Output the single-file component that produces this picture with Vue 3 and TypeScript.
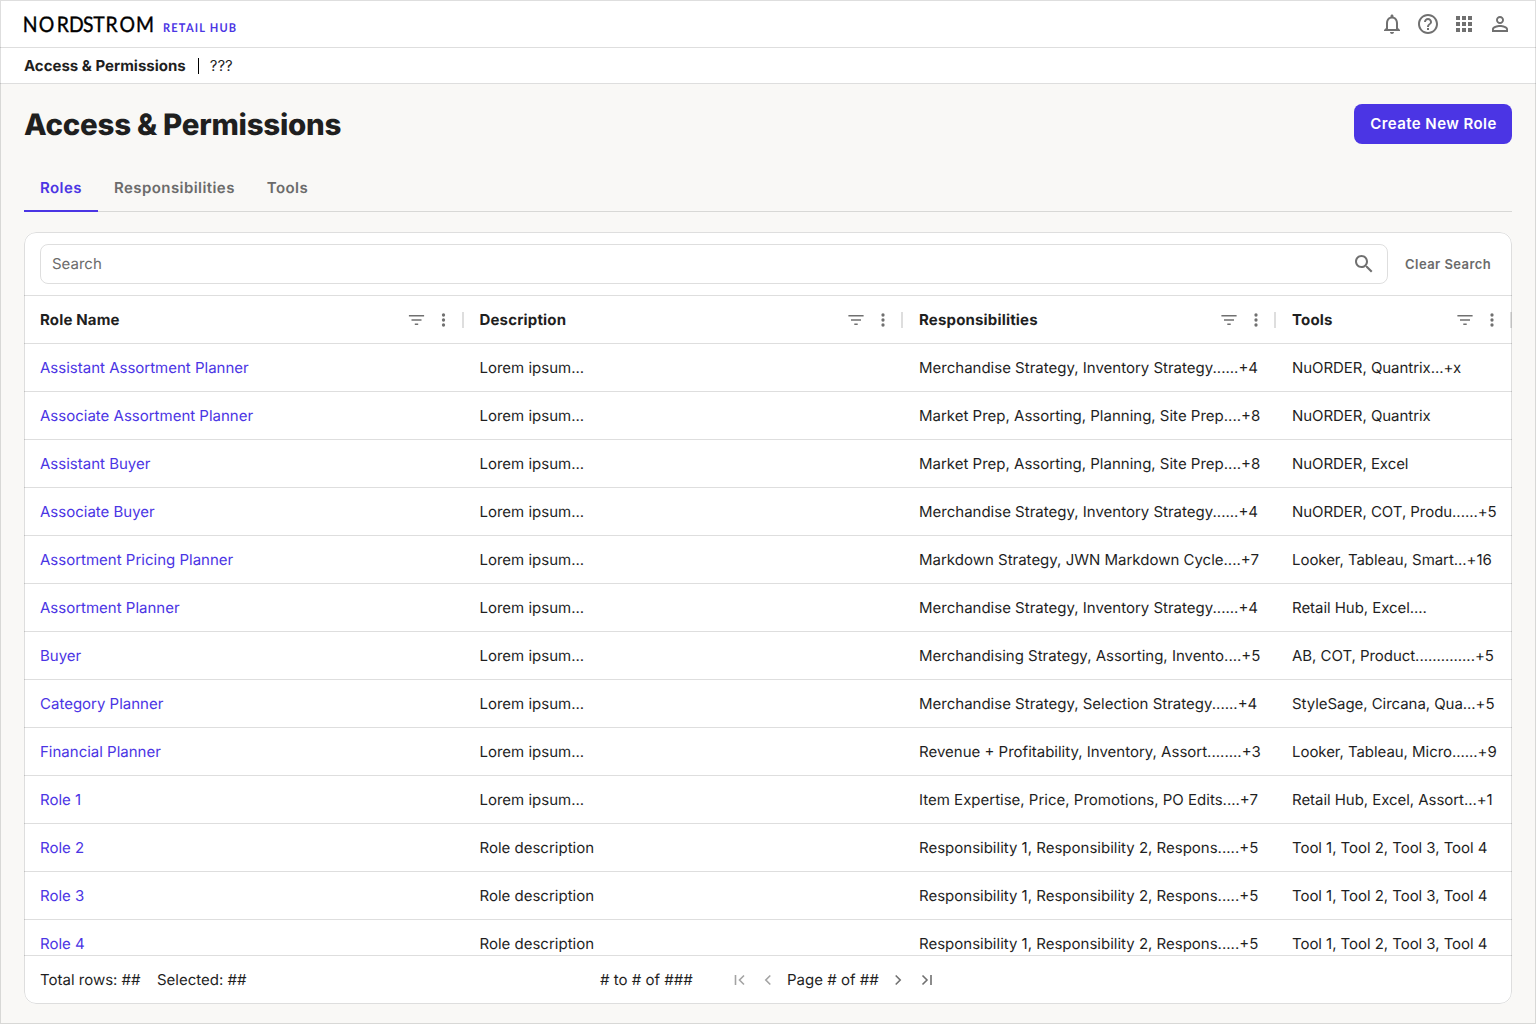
<script setup lang="ts">
interface Role {
  name: string
  description: string
  responsibilities: string
  tools: string
}

const columns: string[] = ['Role Name', 'Description', 'Responsibilities', 'Tools']
const tabs: string[] = ['Roles', 'Responsibilities', 'Tools']
const activeTab = 'Roles'

const lorem = 'Lorem ipsum...'
const role = (name: string, responsibilities: string, tools: string, description = lorem): Role => ({
  name,
  description,
  responsibilities,
  tools,
})

const placeholder = (n: number): Role =>
  role(
    `Role ${n}`,
    'Responsibility 1, Responsibility 2, Respons.....+5',
    'Tool 1, Tool 2, Tool 3, Tool 4',
    'Role description',
  )

const roles: Role[] = [
  role('Assistant Assortment Planner', 'Merchandise Strategy, Inventory Strategy......+4', 'NuORDER, Quantrix...+x'),
  role('Associate Assortment Planner', 'Market Prep, Assorting, Planning, Site Prep....+8', 'NuORDER, Quantrix'),
  role('Assistant Buyer', 'Market Prep, Assorting, Planning, Site Prep....+8', 'NuORDER, Excel'),
  role('Associate Buyer', 'Merchandise Strategy, Inventory Strategy......+4', 'NuORDER, COT, Produ......+5'),
  role('Assortment Pricing Planner', 'Markdown Strategy, JWN Markdown Cycle....+7', 'Looker, Tableau, Smart...+16'),
  role('Assortment Planner', 'Merchandise Strategy, Inventory Strategy......+4', 'Retail Hub, Excel....'),
  role('Buyer', 'Merchandising Strategy, Assorting, Invento....+5', 'AB, COT, Product..............+5'),
  role('Category Planner', 'Merchandise Strategy, Selection Strategy......+4', 'StyleSage, Circana, Qua...+5'),
  role('Financial Planner', 'Revenue + Profitability, Inventory, Assort........+3', 'Looker, Tableau, Micro......+9'),
  role('Role 1', 'Item Expertise, Price, Promotions, PO Edits....+7', 'Retail Hub, Excel, Assort...+1'),
  placeholder(2),
  placeholder(3),
  placeholder(4),
]
</script>

<template>
  <div class="page">
    <header class="topbar">
      <svg class="brand" viewBox="0 0 220 47">
        <text class="wordmark" transform="scale(0.9 1)" x="6.9 25 43.1 58.2 71.4 83.3 97.3 114.6 134.3" y="31.8">NORDSTROM</text>
        <text class="product" transform="translate(139 0) scale(0.92 1)" y="32" textLength="79.5" lengthAdjust="spacing">RETAIL HUB</text>
      </svg>
      <nav class="actions">
        <svg viewBox="0 0 24 24"><path d="M12 22c1.1 0 2-.9 2-2h-4c0 1.1.9 2 2 2zm6-6v-5c0-3.07-1.63-5.64-4.5-6.32V4c0-.83-.67-1.5-1.5-1.5s-1.5.67-1.5 1.5v.68C7.64 5.36 6 7.92 6 11v5l-2 2v1h16v-1l-2-2zm-2 1H8v-6c0-2.48 1.51-4.5 4-4.5s4 2.02 4 4.5v6z" /></svg>
        <svg viewBox="0 0 24 24"><path d="M11 18h2v-2h-2v2zm1-16C6.48 2 2 6.48 2 12s4.48 10 10 10 10-4.48 10-10S17.52 2 12 2zm0 18c-4.41 0-8-3.59-8-8s3.59-8 8-8 8 3.59 8 8-3.59 8-8 8zm0-14c-2.21 0-4 1.79-4 4h2c0-1.1.9-2 2-2s2 .9 2 2c0 2-3 1.75-3 5h2c0-2.25 3-2.5 3-5 0-2.21-1.79-4-4-4z" /></svg>
        <svg viewBox="0 0 24 24"><path d="M4 8h4V4H4v4zm6 12h4v-4h-4v4zm-6 0h4v-4H4v4zm0-6h4v-4H4v4zm6 0h4v-4h-4v4zm6-10v4h4V4h-4zm-6 4h4V4h-4v4zm6 6h4v-4h-4v4zm0 6h4v-4h-4v4z" /></svg>
        <svg viewBox="0 0 24 24"><path d="M12 5.9c1.16 0 2.1.94 2.1 2.1s-.94 2.1-2.1 2.1S9.900 9.160 9.900 8s.94-2.1 2.1-2.1m0 9c2.970 0 6.100 1.460 6.100 2.100v1.100H5.900V17c0-.64 3.130-2.100 6.100-2.100M12 4C9.790 4 8 5.790 8 8s1.790 4 4 4 4-1.790 4-4-1.790-4-4-4zm0 9c-2.670 0-8 1.340-8 4v3h16v-3c0-2.660-5.330-4-8-4z" /></svg>
      </nav>
    </header>

    <div class="crumbs">
      <strong>Access &amp; Permissions</strong>
      <span class="bar"></span>
      <span class="crumb">???</span>
    </div>

    <main class="content">
      <div class="heading">
        <h1>Access &amp; Permissions</h1>
        <button class="create" type="button">Create New Role</button>
      </div>

      <div class="tabs">
        <div v-for="tab in tabs" :key="tab" class="tab" :class="{ active: tab === activeTab }">{{ tab }}</div>
      </div>

      <section class="card">
        <div class="toolbar">
          <div class="search">
            <span>Search</span>
            <svg viewBox="0 0 24 24"><path d="M15.5 14h-.79l-.28-.27C15.410 12.590 16 11.110 16 9.500 16 5.910 13.090 3 9.500 3S3 5.910 3 9.500 5.910 16 9.500 16c1.610 0 3.090-.59 4.230-1.570l.27.28v.79l5 4.990L20.490 19l-4.990-5zm-6 0C7.010 14 5 11.990 5 9.500S7.010 5 9.500 5 14 7.010 14 9.500 11.990 14 9.500 14z" /></svg>
          </div>
          <button class="clear" type="button">Clear Search</button>
        </div>

        <div class="row head">
          <div v-for="column in columns" :key="column" class="cell">
            <span class="label">{{ column }}</span>
            <svg class="filter" viewBox="0 0 20 20"><path d="M2.400 5h15.200v1.500H2.400zM5 9.250h10v1.500H5zM8.300 13.500h3.400V15H8.300z" /></svg>
            <svg class="more" viewBox="0 0 20 20"><circle cx="10" cy="5" r="1.650" /><circle cx="10" cy="10" r="1.650" /><circle cx="10" cy="15" r="1.650" /></svg>
            <i class="handle"></i>
          </div>
        </div>

        <div class="body">
          <div v-for="item in roles" :key="item.name" class="row">
            <a class="cell link">{{ item.name }}</a>
            <div class="cell">{{ item.description }}</div>
            <div class="cell">{{ item.responsibilities }}</div>
            <div class="cell tools">{{ item.tools }}</div>
          </div>
        </div>

        <footer class="footer">
          <span class="total">Total rows: ##</span>
          <span class="selected">Selected: ##</span>
          <div class="pager">
            <span class="range"># to # of ###</span>
            <svg class="dim first" viewBox="0 0 20 20"><path d="M5.500 5v10M14 5.500 9.500 10l4.500 4.500" /></svg>
            <svg class="dim prev" viewBox="0 0 20 20"><path d="M12.300 5.500 7.800 10l4.500 4.500" /></svg>
            <span class="current">Page # of ##</span>
            <svg class="next" viewBox="0 0 20 20"><path d="M7.700 5.500 12.200 10l-4.500 4.500" /></svg>
            <svg class="last" viewBox="0 0 20 20"><path d="M6.500 5.500 11 10l-4.500 4.500M15 5v10" /></svg>
          </div>
        </footer>
      </section>
    </main>
  </div>
</template>

<style>
body {
  margin: 0;
}
</style>

<style scoped>
* {
  box-sizing: border-box;
}

.page {
  --line: rgba(0, 0, 0, 0.13);
  --accent: #4b35e4;
  --ink: #1f1f1f;
  --muted: #6b6b6b;
  --icon: #707070;
  position: relative;
  display: flex;
  flex-direction: column;
  width: 1536px;
  height: 1024px;
  overflow: hidden;
  background: #f9f8f6;
  color: var(--ink);
  font-family: Inter, 'Liberation Sans', sans-serif;
  font-size: 15px;
  font-weight: 400;
  text-rendering: geometricPrecision;
  white-space: nowrap;
}

.page::after,
.card::after {
  content: '';
  position: absolute;
  inset: 0;
  border: 1px solid var(--line);
  pointer-events: none;
}

svg {
  display: block;
  flex: none;
  fill: var(--icon);
}

button {
  padding: 0;
  border: 0;
  background: none;
  font-family: inherit;
}

.topbar {
  display: flex;
  justify-content: space-between;
  height: 48px;
  padding: 0 24px;
  border-bottom: 1px solid var(--line);
  background: #fff;
}

.brand {
  width: 220px;
  height: 47px;
  overflow: visible;
  font-family: Lato, sans-serif;
}

.wordmark {
  fill: #000;
  stroke: #000;
  stroke-width: 0.4px;
  font-size: 21.5px;
  text-anchor: middle;
}

.product {
  fill: var(--accent);
  font-size: 12px;
  font-weight: 700;
}

.actions {
  display: flex;
  align-items: center;
  gap: 12px;
}

.actions svg {
  width: 24px;
  height: 24px;
}

.crumbs {
  display: flex;
  align-items: center;
  height: 36px;
  padding: 0 24px;
  border-bottom: 1px solid var(--line);
  background: #fff;
}

.crumbs strong {
  font-weight: 700;
}

.bar {
  width: 1px;
  height: 16px;
  margin: 0 11px 0 12px;
  background: #000;
}

.content {
  display: flex;
  flex: 1;
  flex-direction: column;
  min-height: 0;
  padding: 20px 24px;
}

.heading {
  display: flex;
  align-items: center;
  justify-content: space-between;
  height: 40px;
}

h1 {
  margin: 2px 0 0;
  font-size: 29.5px;
  font-weight: 800;
  letter-spacing: -0.26px;
}

.create {
  width: 158px;
  height: 40px;
  padding: 0 0 1px 1px;
  border-radius: 8px;
  background: var(--accent);
  color: #fff;
  font-size: 15px;
  font-weight: 600;
  letter-spacing: 0.43px;
}

.tabs {
  display: flex;
  height: 48px;
  margin: 20px 0;
  box-shadow: inset 0 -1px var(--line);
}

.tab {
  padding: 0 16px;
  color: var(--muted);
  font-weight: 600;
  letter-spacing: 0.43px;
  line-height: 48px;
}

.tab.active {
  box-shadow: inset 0 -2px var(--accent);
  color: var(--accent);
}

.card {
  position: relative;
  display: flex;
  flex: 1;
  flex-direction: column;
  min-height: 0;
  overflow: hidden;
  border-radius: 12px;
  background: #fff;
}

.card::after {
  border-radius: 12px;
}

.toolbar {
  display: flex;
  align-items: center;
  height: 64px;
  padding: 0 16px;
  border-bottom: 1px solid var(--line);
}

.search {
  display: flex;
  align-items: center;
  justify-content: space-between;
  width: 1348px;
  height: 40px;
  padding: 0 11px;
  border: 1px solid var(--line);
  border-radius: 8px;
  color: var(--muted);
}

.search svg {
  width: 24px;
  height: 24px;
}

.clear {
  margin-left: 17px;
  color: var(--muted);
  font-size: 13px;
  font-weight: 600;
  letter-spacing: 0.45px;
}

.row {
  display: grid;
  flex: none;
  grid-template-columns: 439.5px 439.5px 373px 236px;
  height: 48px;
  border-bottom: 1px solid var(--line);
}

.cell {
  display: flex;
  align-items: center;
  padding-left: 16px;
}

.tools {
  letter-spacing: -0.05px;
}

.link {
  color: var(--accent);
}

.head {
  font-weight: 700;
  letter-spacing: 0.17px;
}

.head .cell:first-child svg {
  transform: translateX(-0.5px);
}

.label {
  flex: 1;
}

.filter {
  width: 20px;
  height: 20px;
  margin-right: 7px;
}

.more {
  width: 20px;
  height: 20px;
  margin-right: 8px;
}

.handle {
  width: 2px;
  height: 16px;
  background: var(--line);
}

.body {
  display: flex;
  flex: 1;
  flex-direction: column;
  min-height: 0;
  overflow: hidden;
}

.footer {
  display: flex;
  align-items: center;
  height: 49px;
  padding: 0 16px 1px;
  border-top: 1px solid var(--line);
}

.total {
  width: 117px;
}

.selected {
  width: 443px;
}

.pager {
  display: flex;
  align-items: center;
}

.range {
  width: 130px;
}

.pager svg {
  width: 20px;
  height: 20px;
  fill: none;
  stroke: var(--icon);
  stroke-width: 1.6;
}

.pager .dim {
  stroke: #a3a3a3;
}

.prev {
  margin: 0 9px 0 8px;
}

.current {
  width: 101px;
}

.last {
  margin-left: 8px;
}
</style>
